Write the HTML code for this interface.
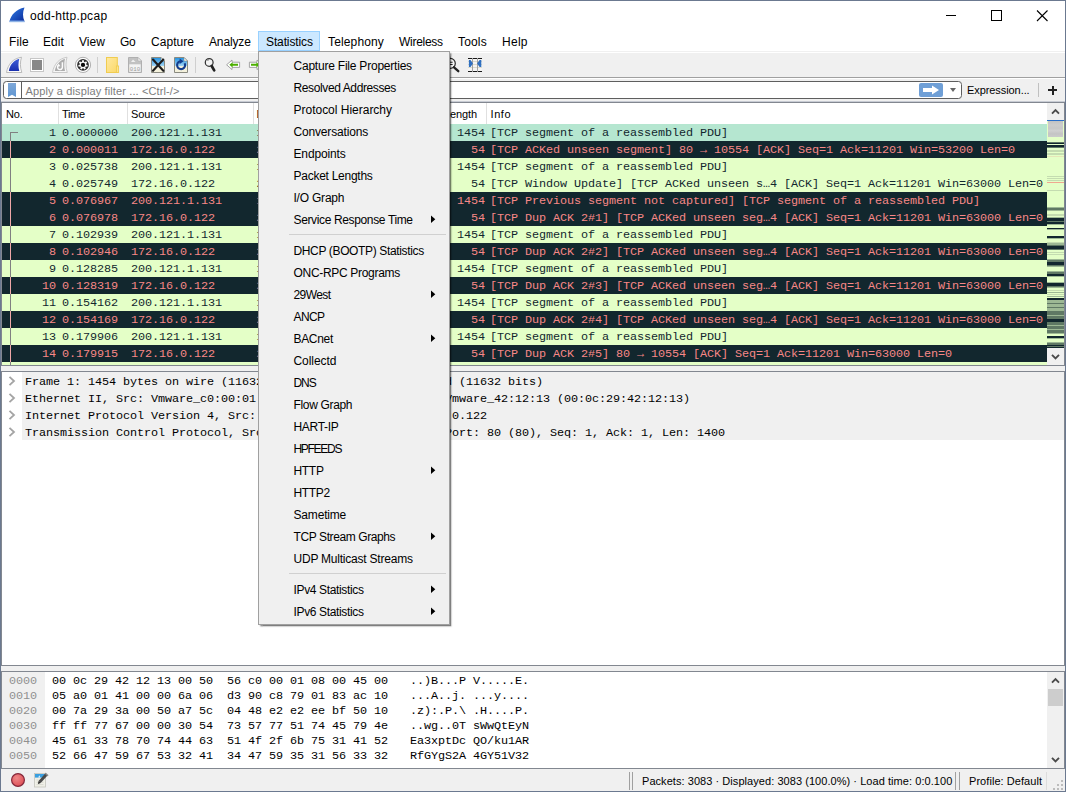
<!DOCTYPE html>
<html><head><meta charset="utf-8"><title>odd-http.pcap</title>
<style>
*{box-sizing:border-box;margin:0;padding:0}
html,body{width:1066px;height:792px;overflow:hidden;background:#fff}
body{font-family:"Liberation Sans",sans-serif;font-size:12px;color:#000;position:relative}
.abs{position:absolute}
.t{position:absolute;white-space:pre;line-height:16px;font-size:12px}
.m{position:absolute;white-space:pre;font-family:"Liberation Mono",monospace;font-size:11.8px;letter-spacing:-0.08px;line-height:17px}
.row{position:absolute;left:2px;width:1045px;height:17px}
.mi{position:absolute;left:34.5px;white-space:pre;font-size:12px;line-height:16px;color:#000}
.arr{position:absolute;left:172px;width:0;height:0;border-left:4.4px solid #000;border-top:3.8px solid transparent;border-bottom:3.8px solid transparent}
.sep{position:absolute;left:30px;width:157px;height:1px;background:#d0d0d0}
</style></head>
<body>
<div class="abs" style="left:0;top:0;width:1066px;height:792px;border:1px solid #6b7990;background:#fff"></div>
<svg class="abs" style="left:9px;top:7px" width="16" height="16" viewBox="0 0 16 16">
<defs><linearGradient id="fin" x1="0" y1="0" x2="1" y2="1"><stop offset="0" stop-color="#2f7fe8"/><stop offset="1" stop-color="#0b2a9a"/></linearGradient></defs>
<path d="M0.5 14.5 C2 8 7 2 15.5 0.5 C13.5 5 13.5 10 15.5 14.5 Z" fill="url(#fin)"/>
<rect x="0.3" y="13.6" width="15.4" height="1.6" fill="#8fb4e6"/>
</svg>
<div class="t" id="title" style="left:30px;top:8px;font-size:12px;letter-spacing:0.308px;">odd-http.pcap</div>
<svg class="abs" style="left:927px;top:1px" width="138" height="30" viewBox="0 0 138 30">
<path d="M19 14.5 H29" stroke="#000" stroke-width="1"/>
<rect x="64.5" y="9.5" width="10" height="10" fill="none" stroke="#000" stroke-width="1"/>
<path d="M110 9.5 L120.5 20 M120.5 9.5 L110 20" stroke="#000" stroke-width="1.1" fill="none"/>
</svg>
<div class="abs" style="left:258px;top:31px;width:62px;height:20px;background:#cce8ff;border:1px solid #99d1ff"></div>
<div class="t" id="mb_File" style="left:9px;top:34px;font-size:12px;letter-spacing:0.114px;">File</div>
<div class="t" id="mb_Edit" style="left:43px;top:34px;font-size:12px;letter-spacing:0.028px;">Edit</div>
<div class="t" id="mb_View" style="left:79px;top:34px;font-size:12px;letter-spacing:0.001px;">View</div>
<div class="t" id="mb_Go" style="left:120px;top:34px;font-size:12px;letter-spacing:-0.408px;">Go</div>
<div class="t" id="mb_Capture" style="left:151px;top:34px;font-size:12px;letter-spacing:0.042px;">Capture</div>
<div class="t" id="mb_Analyze" style="left:209px;top:34px;font-size:12px;letter-spacing:-0.129px;">Analyze</div>
<div class="t" id="mb_Statistics" style="left:266px;top:34px;font-size:12px;letter-spacing:-0.122px;">Statistics</div>
<div class="t" id="mb_Telephony" style="left:328px;top:34px;font-size:12px;letter-spacing:0.142px;">Telephony</div>
<div class="t" id="mb_Wireless" style="left:399px;top:34px;font-size:12px;letter-spacing:-0.277px;">Wireless</div>
<div class="t" id="mb_Tools" style="left:458px;top:34px;font-size:12px;letter-spacing:0.157px;">Tools</div>
<div class="t" id="mb_Help" style="left:502px;top:34px;font-size:12px;letter-spacing:0.278px;">Help</div>
<div class="abs" style="left:1px;top:51px;width:1064px;height:1px;background:#f0f0f0"></div>
<div class="abs" style="left:1px;top:53px;width:1064px;height:24px;background:#f0f0f0"></div>
<div class="abs" style="left:1px;top:77px;width:1064px;height:1px;background:#a0a0a0"></div>
<div class="abs" style="left:1px;top:79px;width:1064px;height:22px;background:#f0f0f0"></div>
<svg class="abs" style="left:0;top:53px" width="500" height="24" viewBox="0 53 500 24">
<defs>
<linearGradient id="g_fin" x1="0" y1="0" x2="0" y2="1"><stop offset="0" stop-color="#3f5fd8"/><stop offset="1" stop-color="#1a2fae"/></linearGradient>
<linearGradient id="g_fold" x1="0" y1="0" x2="1" y2="1"><stop offset="0" stop-color="#ffe9a0"/><stop offset="1" stop-color="#fbd96a"/></linearGradient>
<linearGradient id="g_sky" x1="0" y1="0" x2="0" y2="1"><stop offset="0" stop-color="#1e8fe0"/><stop offset="0.55" stop-color="#9fd4f5"/><stop offset="0.56" stop-color="#f4f1dc"/><stop offset="1" stop-color="#f4f1dc"/></linearGradient>
</defs>
<path d="M6.5 72.5 C8 64 13 58.5 21.5 57.2 C20 62 20 67.5 21.8 72.5 Z" fill="#fbfbfb" stroke="#b4b4b4" stroke-width="0.9"/>
<path d="M8.8 71 C10 65 13.5 60.3 19.3 58.8 C18.2 63 18.2 67 19.3 71 Z" fill="url(#g_fin)"/>
<rect x="30.5" y="58.5" width="13" height="13" fill="#fff" stroke="#c6c6c6"/>
<rect x="32" y="60" width="10" height="10" fill="#888"/>
<path d="M52.5 72.5 C54 64 59 58.5 67 57.2 C65.6 62 65.6 67.5 67.3 72.5 Z" fill="#f6f6f6" stroke="#c4c4c4" stroke-width="0.9"/>
<path d="M54.8 71 C56 65 59.5 60.3 65 58.8 C64 63 64 67 65 71 Z" fill="#adadad"/>
<path d="M62.4 62.3 V67.3 A2.4 2.4 0 1 1 58.4 65.4" fill="none" stroke="#fbfbfb" stroke-width="1.5"/><path d="M57 66.4 L58.6 63.6 L60.4 66.2 Z" fill="#fbfbfb"/>
<circle cx="83" cy="64.9" r="7.6" fill="#fff" stroke="#9c9c9c" stroke-width="0.8"/>
<circle cx="83" cy="64.9" r="5.9" fill="#2c2c2c"/>
<path d="M82.08 60.29 L83.92 60.29 L83.99 61.75 L84.84 62.16 L86.03 61.31 L87.18 62.75 L86.08 63.71 L86.29 64.63 L87.70 65.03 L87.29 66.82 L85.85 66.57 L85.26 67.31 L85.83 68.65 L84.17 69.45 L83.47 68.17 L82.53 68.17 L81.83 69.45 L80.17 68.65 L80.74 67.31 L80.15 66.57 L78.71 66.82 L78.30 65.03 L79.71 64.63 L79.92 63.71 L78.82 62.75 L79.97 61.31 L81.16 62.16 L82.01 61.75 Z" fill="#fafafa"/>
<circle cx="83" cy="64.9" r="2.15" fill="#0c0c0c"/>
<rect x="97" y="57" width="1" height="16" fill="#cfcfcf"/>
<rect x="106.5" y="57.5" width="10.8" height="15" fill="url(#g_fold)" stroke="#f0cc50"/>
<rect x="116.4" y="66" width="2.2" height="6.5" fill="#fde48c" stroke="#f0cc50" stroke-width="0.9"/>
<path d="M128.5 57.5 H138 L141.5 61 V72.5 H128.5 Z" fill="#c2c2c2" stroke="#b0b0b0"/>
<path d="M138 57.5 V61 H141.5 Z" fill="#f4f4f4" stroke="#b0b0b0" stroke-width="0.6"/>
<rect x="129.3" y="64.3" width="11.4" height="7.6" fill="#f4f4f4"/>
<path d="M131 62 L133 59.5 L135.5 62 Z" fill="#f0f0f0"/>
<text x="129.8" y="70.6" font-family="Liberation Mono" font-size="5.8" fill="#9a9a9a" textLength="10.4" lengthAdjust="spacingAndGlyphs">010</text>
<path d="M151.5 57.5 H161 L164.5 61 V72.5 H151.5 Z" fill="url(#g_sky)" stroke="#8a8a80"/>
<path d="M161 57.5 V61 H164.5 Z" fill="#fff" stroke="#8a8a80" stroke-width="0.6"/>
<path d="M153 59.5 L163.3 70.8 M163.3 59.5 L153 70.8" stroke="#1c1c1c" stroke-width="2.1" stroke-linecap="round"/>
<path d="M174.5 57.5 H184 L187.5 61 V72.5 H174.5 Z" fill="url(#g_sky)" stroke="#8a8a80"/>
<path d="M184 57.5 V61 H187.5 Z" fill="#fff" stroke="#8a8a80" stroke-width="0.6"/>
<path d="M184.6 63.2 A4 4 0 1 1 180 61.3" fill="none" stroke="#143c8c" stroke-width="2.1"/>
<path d="M179.6 58.6 L183.6 61.2 L179.6 63.9 Z" fill="#143c8c"/>
<rect x="195" y="57" width="1" height="16" fill="#cfcfcf"/>
<circle cx="209.2" cy="62.4" r="3.9" fill="#f3f3f3" stroke="#333" stroke-width="1.25"/>
<path d="M207.2 61 A2.4 2.4 0 0 1 209 59.8" fill="none" stroke="#555" stroke-width="0.6"/>
<path d="M211.7 66 L214.2 70.4" stroke="#222" stroke-width="2.7" stroke-linecap="round"/>
<path d="M226.6 64.8 L232 60 V62.2 H239.6 V67.4 H232 V69.6 Z" fill="#fff" stroke="#9a9a9a" stroke-width="0.9" stroke-linejoin="round"/>
<path d="M229.3 64.8 L232.6 62.2 V63.8 H238 V65.8 H232.6 V67.4 Z" fill="#4caf00"/>
<path d="M249.4 62.2 H257 V60 L262.4 64.8 L257 69.6 V67.4 H249.4 Z" fill="#fff" stroke="#9a9a9a" stroke-width="0.9" stroke-linejoin="round"/>
<path d="M251 63.8 H256.4 V62.2 L259.7 64.8 L256.4 67.4 V65.8 H251 Z" fill="#4caf00"/>
<circle cx="450.3" cy="63.4" r="5" fill="#f6f6f6" stroke="#2a2a2a" stroke-width="1.2"/>
<path d="M448 62.3 H452.6 M448 64.5 H452.6" stroke="#222" stroke-width="1.1"/>
<path d="M454 67.3 L458.3 71.2" stroke="#222" stroke-width="2.3" stroke-linecap="round"/>
<rect x="468" y="58" width="14" height="14" fill="#f4f4f4"/>
<path d="M468 61.5 H482 M468 64.5 H482 M468 67.5 H482" stroke="#d4d4c4" stroke-width="0.8"/>
<path d="M472.5 58 V72 M477.5 58 V72" stroke="#a2a2a2" stroke-width="1"/>
<path d="M468 58.5 H472 M473 58.5 H477 M478 58.5 H482 M468 71.5 H472 M473 71.5 H477 M478 71.5 H482" stroke="#1a1a1a" stroke-width="1"/>
<path d="M468.9 59.9 H470.5 L473 63.4 L470.5 66.9 H468.9 Z M481.3 59.9 H479.6 L477.1 63.4 L479.6 66.9 H481.3 Z" fill="#2f6fc0"/>
</svg>
<div class="abs" style="left:3px;top:81px;width:959px;height:18px;background:#fff;border:1px solid #5e5e5e;border-radius:3.5px"></div>
<div class="abs" style="left:21px;top:82px;width:1px;height:16px;background:#5e5e5e"></div>
<svg class="abs" style="left:8px;top:83px" width="8" height="14" viewBox="0 0 8 14"><defs><linearGradient id="bm" x1="0" y1="0" x2="0" y2="1"><stop offset="0" stop-color="#7fa8d8"/><stop offset="1" stop-color="#5f96d2"/></linearGradient></defs><path d="M0 0 H8 V14 L4 11.7 L0 14 Z" fill="url(#bm)"/></svg>
<div class="t" id="flt" style="left:25.5px;top:83px;font-size:11px;letter-spacing:0.123px;color:#7d7d7d">Apply a display filter ... &lt;Ctrl-/&gt;</div>
<div class="abs" style="left:919px;top:83px;width:24px;height:14px;background:#6f9fd6;border-radius:2px"></div>
<svg class="abs" style="left:919px;top:83px" width="24" height="14" viewBox="0 0 24 14"><path d="M4 5 H13 V2.5 L20 7 L13 11.5 V9 H4 Z" fill="#fff"/></svg>
<div class="abs" style="left:950px;top:88px;width:0;height:0;border-top:4px solid #666;border-left:3.5px solid transparent;border-right:3.5px solid transparent"></div>
<div class="t" id="expr" style="left:967px;top:82px;font-size:11px;letter-spacing:-0.076px;">Expression...</div>
<div class="abs" style="left:1038px;top:83px;width:1px;height:14px;background:#c0c0c0"></div>
<div class="abs" style="left:1048px;top:89px;width:9px;height:2px;background:#222"></div>
<div class="abs" style="left:1051.5px;top:85.5px;width:2px;height:9px;background:#222"></div>
<div class="abs" style="left:1px;top:101px;width:1064px;height:1px;background:#c8ccd4"></div>
<div class="abs" style="left:1px;top:102px;width:1064px;height:264px;border:1px solid #828790;border-top-color:#828790;background:#fff"></div>
<div class="abs" style="left:58px;top:103px;width:1px;height:21px;background:#e0e0e0"></div>
<div class="abs" style="left:127px;top:103px;width:1px;height:21px;background:#e0e0e0"></div>
<div class="abs" style="left:253px;top:103px;width:1px;height:21px;background:#e0e0e0"></div>
<div class="abs" style="left:486px;top:103px;width:1px;height:21px;background:#e0e0e0"></div>
<div class="t" id="h_No." style="left:6px;top:106px;font-size:11px;letter-spacing:-0.175px;">No.</div>
<div class="t" id="h_Time" style="left:62px;top:106px;font-size:11px;letter-spacing:-0.337px;">Time</div>
<div class="t" id="h_Source" style="left:131px;top:106px;font-size:11px;letter-spacing:-0.127px;">Source</div>
<div class="t" id="h_Destination" style="left:256.5px;top:106px;font-size:11px;letter-spacing:0.159px;">Destination</div>
<div class="t" id="h_Info" style="left:490.5px;top:106px;font-size:11px;letter-spacing:0.585px;">Info</div>
<div class="t" id="h_Length" style="right:589px;top:106px;font-size:11px;letter-spacing:-0.127px">Length</div>
<div class="row" style="top:124px;background:#b5e6d0;color:#12272e"><span class="m" style="right:991.08px;top:1px">1</span><span class="m" style="left:60px;top:1px">0.000000</span><span class="m" style="left:129px;top:1px">200.121.1.131</span><span class="m" style="left:254.60000000000002px;top:1px">172.16.0.122</span><span class="m" style="left:381px;top:1px">TCP</span><span class="m" style="right:562.08px;top:1px">1454</span><span class="m" style="left:488px;top:1px">[TCP segment of a reassembled PDU]</span></div>
<div class="abs" style="left:10px;top:132px;width:1px;height:9px;background:#808080"></div>
<div class="abs" style="left:10px;top:132px;width:8px;height:1px;background:#808080"></div>
<div class="row" style="top:141px;background:#12272e;color:#f78787"><span class="m" style="right:991.08px;top:1px">2</span><span class="m" style="left:60px;top:1px">0.000011</span><span class="m" style="left:129px;top:1px">172.16.0.122</span><span class="m" style="left:254.60000000000002px;top:1px">200.121.1.131</span><span class="m" style="left:381px;top:1px">TCP</span><span class="m" style="right:562.08px;top:1px">54</span><span class="m" style="left:488px;top:1px">[TCP ACKed unseen segment] 80 → 10554 [ACK] Seq=1 Ack=11201 Win=53200 Len=0</span></div>
<div class="abs" style="left:10px;top:141px;width:1px;height:17px;background:#f0a8a8"></div>
<div class="row" style="top:158px;background:#e4ffc7;color:#12272e"><span class="m" style="right:991.08px;top:1px">3</span><span class="m" style="left:60px;top:1px">0.025738</span><span class="m" style="left:129px;top:1px">200.121.1.131</span><span class="m" style="left:254.60000000000002px;top:1px">172.16.0.122</span><span class="m" style="left:381px;top:1px">TCP</span><span class="m" style="right:562.08px;top:1px">1454</span><span class="m" style="left:488px;top:1px">[TCP segment of a reassembled PDU]</span></div>
<div class="abs" style="left:10px;top:158px;width:1px;height:17px;background:#808080"></div>
<div class="row" style="top:175px;background:#e4ffc7;color:#12272e"><span class="m" style="right:991.08px;top:1px">4</span><span class="m" style="left:60px;top:1px">0.025749</span><span class="m" style="left:129px;top:1px">172.16.0.122</span><span class="m" style="left:254.60000000000002px;top:1px">200.121.1.131</span><span class="m" style="left:381px;top:1px">TCP</span><span class="m" style="right:562.08px;top:1px">54</span><span class="m" style="left:488px;top:1px">[TCP Window Update] [TCP ACKed unseen s…4 [ACK] Seq=1 Ack=11201 Win=63000 Len=0</span></div>
<div class="abs" style="left:10px;top:175px;width:1px;height:17px;background:#808080"></div>
<div class="row" style="top:192px;background:#12272e;color:#f78787"><span class="m" style="right:991.08px;top:1px">5</span><span class="m" style="left:60px;top:1px">0.076967</span><span class="m" style="left:129px;top:1px">200.121.1.131</span><span class="m" style="left:254.60000000000002px;top:1px">172.16.0.122</span><span class="m" style="left:381px;top:1px">TCP</span><span class="m" style="right:562.08px;top:1px">1454</span><span class="m" style="left:488px;top:1px">[TCP Previous segment not captured] [TCP segment of a reassembled PDU]</span></div>
<div class="abs" style="left:10px;top:192px;width:1px;height:17px;background:#f0a8a8"></div>
<div class="row" style="top:209px;background:#12272e;color:#f78787"><span class="m" style="right:991.08px;top:1px">6</span><span class="m" style="left:60px;top:1px">0.076978</span><span class="m" style="left:129px;top:1px">172.16.0.122</span><span class="m" style="left:254.60000000000002px;top:1px">200.121.1.131</span><span class="m" style="left:381px;top:1px">TCP</span><span class="m" style="right:562.08px;top:1px">54</span><span class="m" style="left:488px;top:1px">[TCP Dup ACK 2#1] [TCP ACKed unseen seg…4 [ACK] Seq=1 Ack=11201 Win=63000 Len=0</span></div>
<div class="abs" style="left:10px;top:209px;width:1px;height:17px;background:#f0a8a8"></div>
<div class="row" style="top:226px;background:#e4ffc7;color:#12272e"><span class="m" style="right:991.08px;top:1px">7</span><span class="m" style="left:60px;top:1px">0.102939</span><span class="m" style="left:129px;top:1px">200.121.1.131</span><span class="m" style="left:254.60000000000002px;top:1px">172.16.0.122</span><span class="m" style="left:381px;top:1px">TCP</span><span class="m" style="right:562.08px;top:1px">1454</span><span class="m" style="left:488px;top:1px">[TCP segment of a reassembled PDU]</span></div>
<div class="abs" style="left:10px;top:226px;width:1px;height:17px;background:#808080"></div>
<div class="row" style="top:243px;background:#12272e;color:#f78787"><span class="m" style="right:991.08px;top:1px">8</span><span class="m" style="left:60px;top:1px">0.102946</span><span class="m" style="left:129px;top:1px">172.16.0.122</span><span class="m" style="left:254.60000000000002px;top:1px">200.121.1.131</span><span class="m" style="left:381px;top:1px">TCP</span><span class="m" style="right:562.08px;top:1px">54</span><span class="m" style="left:488px;top:1px">[TCP Dup ACK 2#2] [TCP ACKed unseen seg…4 [ACK] Seq=1 Ack=11201 Win=63000 Len=0</span></div>
<div class="abs" style="left:10px;top:243px;width:1px;height:17px;background:#f0a8a8"></div>
<div class="row" style="top:260px;background:#e4ffc7;color:#12272e"><span class="m" style="right:991.08px;top:1px">9</span><span class="m" style="left:60px;top:1px">0.128285</span><span class="m" style="left:129px;top:1px">200.121.1.131</span><span class="m" style="left:254.60000000000002px;top:1px">172.16.0.122</span><span class="m" style="left:381px;top:1px">TCP</span><span class="m" style="right:562.08px;top:1px">1454</span><span class="m" style="left:488px;top:1px">[TCP segment of a reassembled PDU]</span></div>
<div class="abs" style="left:10px;top:260px;width:1px;height:17px;background:#808080"></div>
<div class="row" style="top:277px;background:#12272e;color:#f78787"><span class="m" style="right:991.08px;top:1px">10</span><span class="m" style="left:60px;top:1px">0.128319</span><span class="m" style="left:129px;top:1px">172.16.0.122</span><span class="m" style="left:254.60000000000002px;top:1px">200.121.1.131</span><span class="m" style="left:381px;top:1px">TCP</span><span class="m" style="right:562.08px;top:1px">54</span><span class="m" style="left:488px;top:1px">[TCP Dup ACK 2#3] [TCP ACKed unseen seg…4 [ACK] Seq=1 Ack=11201 Win=63000 Len=0</span></div>
<div class="abs" style="left:10px;top:277px;width:1px;height:17px;background:#f0a8a8"></div>
<div class="row" style="top:294px;background:#e4ffc7;color:#12272e"><span class="m" style="right:991.08px;top:1px">11</span><span class="m" style="left:60px;top:1px">0.154162</span><span class="m" style="left:129px;top:1px">200.121.1.131</span><span class="m" style="left:254.60000000000002px;top:1px">172.16.0.122</span><span class="m" style="left:381px;top:1px">TCP</span><span class="m" style="right:562.08px;top:1px">1454</span><span class="m" style="left:488px;top:1px">[TCP segment of a reassembled PDU]</span></div>
<div class="abs" style="left:10px;top:294px;width:1px;height:17px;background:#808080"></div>
<div class="row" style="top:311px;background:#12272e;color:#f78787"><span class="m" style="right:991.08px;top:1px">12</span><span class="m" style="left:60px;top:1px">0.154169</span><span class="m" style="left:129px;top:1px">172.16.0.122</span><span class="m" style="left:254.60000000000002px;top:1px">200.121.1.131</span><span class="m" style="left:381px;top:1px">TCP</span><span class="m" style="right:562.08px;top:1px">54</span><span class="m" style="left:488px;top:1px">[TCP Dup ACK 2#4] [TCP ACKed unseen seg…4 [ACK] Seq=1 Ack=11201 Win=63000 Len=0</span></div>
<div class="abs" style="left:10px;top:311px;width:1px;height:17px;background:#f0a8a8"></div>
<div class="row" style="top:328px;background:#e4ffc7;color:#12272e"><span class="m" style="right:991.08px;top:1px">13</span><span class="m" style="left:60px;top:1px">0.179906</span><span class="m" style="left:129px;top:1px">200.121.1.131</span><span class="m" style="left:254.60000000000002px;top:1px">172.16.0.122</span><span class="m" style="left:381px;top:1px">TCP</span><span class="m" style="right:562.08px;top:1px">1454</span><span class="m" style="left:488px;top:1px">[TCP segment of a reassembled PDU]</span></div>
<div class="abs" style="left:10px;top:328px;width:1px;height:17px;background:#808080"></div>
<div class="row" style="top:345px;background:#12272e;color:#f78787"><span class="m" style="right:991.08px;top:1px">14</span><span class="m" style="left:60px;top:1px">0.179915</span><span class="m" style="left:129px;top:1px">172.16.0.122</span><span class="m" style="left:254.60000000000002px;top:1px">200.121.1.131</span><span class="m" style="left:381px;top:1px">TCP</span><span class="m" style="right:562.08px;top:1px">54</span><span class="m" style="left:488px;top:1px">[TCP Dup ACK 2#5] 80 → 10554 [ACK] Seq=1 Ack=11201 Win=63000 Len=0</span></div>
<div class="abs" style="left:10px;top:345px;width:1px;height:17px;background:#f0a8a8"></div>
<div class="row" style="top:362px;height:3px;background:#e4ffc7"></div>
<div class="abs" style="left:10px;top:362px;width:1px;height:3px;background:#808080"></div>
<div class="abs" style="left:1047px;top:103px;width:17px;height:262px;background:#f0f0f0"></div>
<div class="abs" style="left:1047px;top:120px;width:17px;height:228px;background:#e4ffc7"></div>
<div class="abs" style="left:1047px;top:120px;width:17px;height:228px;overflow:hidden"><div class="abs" style="left:-6px;top:0;width:29px;height:228px;filter:blur(0.55px)">
<div class="abs" style="left:0;top:22px;width:29px;height:1px;background:#5f7864"></div>
<div class="abs" style="left:0;top:23px;width:29px;height:1px;background:#12272e"></div>
<div class="abs" style="left:0;top:25px;width:29px;height:2px;background:#12272e"></div>
<div class="abs" style="left:0;top:27px;width:29px;height:1px;background:#5f7864"></div>
<div class="abs" style="left:0;top:30px;width:29px;height:2px;background:#c4dcb0"></div>
<div class="abs" style="left:0;top:33px;width:29px;height:2px;background:#c4dcb0"></div>
<div class="abs" style="left:0;top:36px;width:29px;height:1px;background:#e6e6b8"></div>
<div class="abs" style="left:0;top:56px;width:29px;height:1px;background:#c4dcb0"></div>
<div class="abs" style="left:0;top:58px;width:29px;height:1px;background:#c4dcb0"></div>
<div class="abs" style="left:0;top:60px;width:29px;height:1px;background:#c4dcb0"></div>
<div class="abs" style="left:0;top:62px;width:29px;height:1px;background:#f0a890"></div>
<div class="abs" style="left:0;top:70px;width:29px;height:1px;background:#c4dcb0"></div>
<div class="abs" style="left:0;top:87px;width:29px;height:1px;background:#9db894"></div>
<div class="abs" style="left:0;top:88px;width:29px;height:2px;background:#5f7864"></div>
<div class="abs" style="left:0;top:90px;width:29px;height:1px;background:#9db894"></div>
<div class="abs" style="left:0;top:94px;width:29px;height:2px;background:#c4dcb0"></div>
<div class="abs" style="left:0;top:97px;width:29px;height:1px;background:#9db894"></div>
<div class="abs" style="left:0;top:98px;width:29px;height:3px;background:#12272e"></div>
<div class="abs" style="left:0;top:101px;width:29px;height:1px;background:#5f7864"></div>
<div class="abs" style="left:0;top:102px;width:29px;height:2px;background:#12272e"></div>
<div class="abs" style="left:0;top:104px;width:29px;height:1px;background:#9db894"></div>
<div class="abs" style="left:0;top:108px;width:29px;height:1px;background:#12272e"></div>
<div class="abs" style="left:0;top:109px;width:29px;height:1px;background:#9db894"></div>
<div class="abs" style="left:0;top:116px;width:29px;height:2px;background:#12272e"></div>
<div class="abs" style="left:0;top:118px;width:29px;height:1px;background:#9db894"></div>
<div class="abs" style="left:0;top:122px;width:29px;height:1px;background:#c4dcb0"></div>
<div class="abs" style="left:0;top:123px;width:29px;height:2px;background:#9db894"></div>
<div class="abs" style="left:0;top:125px;width:29px;height:1px;background:#5f7864"></div>
<div class="abs" style="left:0;top:126px;width:29px;height:3px;background:#12272e"></div>
<div class="abs" style="left:0;top:129px;width:29px;height:1px;background:#5f7864"></div>
<div class="abs" style="left:0;top:132px;width:29px;height:1px;background:#c4dcb0"></div>
<div class="abs" style="left:0;top:134px;width:29px;height:1px;background:#c4dcb0"></div>
<div class="abs" style="left:0;top:139px;width:29px;height:1px;background:#9db894"></div>
<div class="abs" style="left:0;top:140px;width:29px;height:2px;background:#5f7864"></div>
<div class="abs" style="left:0;top:142px;width:29px;height:3px;background:#12272e"></div>
<div class="abs" style="left:0;top:145px;width:29px;height:1px;background:#5f7864"></div>
<div class="abs" style="left:0;top:146px;width:29px;height:1px;background:#9db894"></div>
<div class="abs" style="left:0;top:151px;width:29px;height:1px;background:#9db894"></div>
<div class="abs" style="left:0;top:152px;width:29px;height:2px;background:#5f7864"></div>
<div class="abs" style="left:0;top:154px;width:29px;height:2px;background:#12272e"></div>
<div class="abs" style="left:0;top:156px;width:29px;height:1px;background:#9db894"></div>
<div class="abs" style="left:0;top:162px;width:29px;height:1px;background:#9db894"></div>
<div class="abs" style="left:0;top:163px;width:29px;height:3px;background:#12272e"></div>
<div class="abs" style="left:0;top:166px;width:29px;height:1px;background:#5f7864"></div>
<div class="abs" style="left:0;top:167px;width:29px;height:1px;background:#9db894"></div>
<div class="abs" style="left:0;top:170px;width:29px;height:1px;background:#c4dcb0"></div>
<div class="abs" style="left:0;top:172px;width:29px;height:1px;background:#9db894"></div>
<div class="abs" style="left:0;top:174px;width:29px;height:1px;background:#c4dcb0"></div>
<div class="abs" style="left:0;top:176px;width:29px;height:1px;background:#9db894"></div>
<div class="abs" style="left:0;top:178px;width:29px;height:2px;background:#12272e"></div>
<div class="abs" style="left:0;top:180px;width:29px;height:11px;background:#9db894"></div>
<div class="abs" style="left:0;top:183px;width:29px;height:1px;background:#5f7864"></div>
<div class="abs" style="left:0;top:187px;width:29px;height:1px;background:#5f7864"></div>
<div class="abs" style="left:0;top:191px;width:29px;height:1px;background:#5f7864"></div>
<div class="abs" style="left:0;top:192px;width:29px;height:7px;background:#5f7864"></div>
<div class="abs" style="left:0;top:195px;width:29px;height:1px;background:#9db894"></div>
<div class="abs" style="left:0;top:199px;width:29px;height:3px;background:#12272e"></div>
<div class="abs" style="left:0;top:202px;width:29px;height:11px;background:#5f7864"></div>
<div class="abs" style="left:0;top:205px;width:29px;height:1px;background:#9db894"></div>
<div class="abs" style="left:0;top:209px;width:29px;height:1px;background:#9db894"></div>
<div class="abs" style="left:0;top:213px;width:29px;height:1px;background:#9db894"></div>
<div class="abs" style="left:0;top:216px;width:29px;height:2px;background:#12272e"></div>
<div class="abs" style="left:0;top:218px;width:29px;height:1px;background:#9db894"></div>
<div class="abs" style="left:0;top:222px;width:29px;height:1px;background:#9db894"></div>
<div class="abs" style="left:0;top:223px;width:29px;height:4px;background:#5f7864"></div>
<div class="abs" style="left:0;top:225px;width:29px;height:1px;background:#12272e"></div>
<div class="abs" style="left:0;top:227px;width:29px;height:1px;background:#12272e"></div>
</div></div>
<div class="abs" style="left:1047px;top:120px;width:17px;height:1px;background:#2a6fc9"></div>
<div class="abs" style="left:1048px;top:121px;width:15px;height:16px;background:linear-gradient(#c2c2c2,#cdcdcd 25%,#c8c8c8 45%,#d0d0d0 60%,#c4c4c4 80%,#cbcbcb)"></div>
<svg class="abs" style="left:1047px;top:103px" width="17" height="17" viewBox="0 0 17 17"><path d="M5 10.6 L8.5 7.1 L12 10.6" fill="none" stroke="#4a4a4a" stroke-width="1.9"/></svg>
<svg class="abs" style="left:1047px;top:348px" width="17" height="17" viewBox="0 0 17 17"><path d="M5 6.8 L8.5 10.3 L12 6.8" fill="none" stroke="#4a4a4a" stroke-width="1.9"/></svg>
<div class="abs" style="left:1px;top:366px;width:1064px;height:5px;background:#f0f0f0"></div>
<div class="abs" style="left:1px;top:371px;width:1064px;height:295px;border:1px solid #828790;background:#fff"></div>
<div class="abs" style="left:22px;top:372px;width:1042px;height:17px;background:#f0f0f0"></div>
<div class="m" style="left:25px;top:374px">Frame 1: 1454 bytes on wire (11632 bits), 1454 bytes captured (11632 bits)</div>
<svg class="abs" style="left:8px;top:376px" width="8" height="10" viewBox="0 0 8 10"><path d="M1.5 0.8 L6 5 L1.5 9.2" fill="none" stroke="#a4a4a4" stroke-width="1.8"/></svg>
<div class="abs" style="left:22px;top:389px;width:1042px;height:17px;background:#f0f0f0"></div>
<div class="m" style="left:25px;top:391px">Ethernet II, Src: Vmware_c0:00:01 (00:50:56:c0:00:01), Dst: Vmware_42:12:13 (00:0c:29:42:12:13)</div>
<svg class="abs" style="left:8px;top:393px" width="8" height="10" viewBox="0 0 8 10"><path d="M1.5 0.8 L6 5 L1.5 9.2" fill="none" stroke="#a4a4a4" stroke-width="1.8"/></svg>
<div class="abs" style="left:22px;top:406px;width:1042px;height:17px;background:#f0f0f0"></div>
<div class="m" style="left:25px;top:408px">Internet Protocol Version 4, Src: 200.121.1.131, Dst: 172.16.0.122</div>
<svg class="abs" style="left:8px;top:410px" width="8" height="10" viewBox="0 0 8 10"><path d="M1.5 0.8 L6 5 L1.5 9.2" fill="none" stroke="#a4a4a4" stroke-width="1.8"/></svg>
<div class="abs" style="left:22px;top:423px;width:1042px;height:17px;background:#f0f0f0"></div>
<div class="m" style="left:25px;top:425px">Transmission Control Protocol, Src Port: 10554 (10554), Dst Port: 80 (80), Seq: 1, Ack: 1, Len: 1400</div>
<svg class="abs" style="left:8px;top:427px" width="8" height="10" viewBox="0 0 8 10"><path d="M1.5 0.8 L6 5 L1.5 9.2" fill="none" stroke="#a4a4a4" stroke-width="1.8"/></svg>
<div class="abs" style="left:1px;top:666px;width:1064px;height:5px;background:#f0f0f0"></div>
<div class="abs" style="left:1px;top:671px;width:1064px;height:98px;border:1px solid #828790;background:#fff"></div>
<div class="abs" style="left:2px;top:672px;width:43px;height:96px;background:#f0f0f0"></div>
<div class="m" style="left:9px;top:674px;line-height:15px;color:#909090">0000</div>
<div class="m" style="left:52px;top:674px;line-height:15px">00 0c 29 42 12 13 00 50  56 c0 00 01 08 00 45 00</div>
<div class="m" style="left:410px;top:674px;line-height:15px">..)B...P V.....E.</div>
<div class="m" style="left:9px;top:689px;line-height:15px;color:#909090">0010</div>
<div class="m" style="left:52px;top:689px;line-height:15px">05 a0 01 41 00 00 6a 06  d3 90 c8 79 01 83 ac 10</div>
<div class="m" style="left:410px;top:689px;line-height:15px">...A..j. ...y....</div>
<div class="m" style="left:9px;top:704px;line-height:15px;color:#909090">0020</div>
<div class="m" style="left:52px;top:704px;line-height:15px">00 7a 29 3a 00 50 a7 5c  04 48 e2 e2 ee bf 50 10</div>
<div class="m" style="left:410px;top:704px;line-height:15px">.z):.P.\ .H....P.</div>
<div class="m" style="left:9px;top:719px;line-height:15px;color:#909090">0030</div>
<div class="m" style="left:52px;top:719px;line-height:15px">ff ff 77 67 00 00 30 54  73 57 77 51 74 45 79 4e</div>
<div class="m" style="left:410px;top:719px;line-height:15px">..wg..0T sWwQtEyN</div>
<div class="m" style="left:9px;top:734px;line-height:15px;color:#909090">0040</div>
<div class="m" style="left:52px;top:734px;line-height:15px">45 61 33 78 70 74 44 63  51 4f 2f 6b 75 31 41 52</div>
<div class="m" style="left:410px;top:734px;line-height:15px">Ea3xptDc QO/ku1AR</div>
<div class="m" style="left:9px;top:749px;line-height:15px;color:#909090">0050</div>
<div class="m" style="left:52px;top:749px;line-height:15px">52 66 47 59 67 53 32 41  34 47 59 35 31 56 33 32</div>
<div class="m" style="left:410px;top:749px;line-height:15px">RfGYgS2A 4GY51V32</div>
<div class="abs" style="left:1047px;top:672px;width:17px;height:96px;background:#f0f0f0"></div>
<div class="abs" style="left:1048px;top:689px;width:15px;height:17px;background:#cdcdcd"></div>
<svg class="abs" style="left:1047px;top:672px" width="17" height="17" viewBox="0 0 17 17"><path d="M5 10.6 L8.5 7.1 L12 10.6" fill="none" stroke="#4a4a4a" stroke-width="1.9"/></svg>
<svg class="abs" style="left:1047px;top:751px" width="17" height="17" viewBox="0 0 17 17"><path d="M5 6.8 L8.5 10.3 L12 6.8" fill="none" stroke="#4a4a4a" stroke-width="1.9"/></svg>
<div class="abs" style="left:1px;top:769px;width:1064px;height:22px;background:#f0f0f0"></div>
<svg class="abs" style="left:10px;top:772px" width="42" height="16" viewBox="10 772 42 16">
<defs><radialGradient id="g_red" cx="0.4" cy="0.35" r="0.7"><stop offset="0" stop-color="#ee8888"/><stop offset="1" stop-color="#dd4c54"/></radialGradient></defs>
<circle cx="18" cy="780" r="6.4" fill="url(#g_red)" stroke="#84283a" stroke-width="1.2"/>
<rect x="34.5" y="773.5" width="11" height="13.5" fill="#f0f0e8" stroke="#c4c4bc" stroke-width="0.8"/>
<rect x="35" y="774" width="10" height="3.6" fill="#3a9fe0"/>
<path d="M38.3 777.6 L39.3 775.2 L40.3 777.6 Z" fill="#f4f8fc"/>
<path d="M36.5 780 H38.5 M36.5 782.3 H38 M36.5 784.6 H43.5 M42 782.3 H43.5" stroke="#d2d2ca" stroke-width="0.8"/>
<path d="M39.6 782 L46.4 774.4" stroke="#4a4a4a" stroke-width="3" stroke-linecap="butt"/>
<path d="M37.9 783.9 L38.6 780.9 L40.7 782.9 Z" fill="#1e1e1e"/>
<path d="M45.6 773.5 L47.6 775.3" stroke="#8a8a8a" stroke-width="1.6" stroke-linecap="round"/>
</svg>
<svg class="abs" style="left:1050px;top:778px" width="14" height="13" viewBox="1050 778 14 13"><rect x="1061" y="780" width="2" height="2" fill="#bcbcbc"/><rect x="1057" y="784" width="2" height="2" fill="#bcbcbc"/><rect x="1061" y="784" width="2" height="2" fill="#bcbcbc"/><rect x="1053" y="788" width="2" height="2" fill="#bcbcbc"/><rect x="1057" y="788" width="2" height="2" fill="#bcbcbc"/><rect x="1061" y="788" width="2" height="2" fill="#bcbcbc"/></svg>
<div class="abs" style="left:629px;top:772px;width:1px;height:18px;background:#a0a0a0"></div>
<div class="abs" style="left:632px;top:772px;width:1px;height:18px;background:#a0a0a0"></div>
<div class="abs" style="left:955px;top:772px;width:1px;height:18px;background:#a0a0a0"></div>
<div class="abs" style="left:959px;top:772px;width:1px;height:18px;background:#a0a0a0"></div>
<div class="t" id="st1" style="left:642px;top:773px;font-size:11px;letter-spacing:0.055px;">Packets: 3083 · Displayed: 3083 (100.0%) · Load time: 0:0.100</div>
<div class="t" id="st2" style="left:969px;top:773px;font-size:11px;letter-spacing:0.059px;">Profile: Default</div>
<div class="abs" style="left:1046px;top:772px;width:1px;height:18px;background:#dcdcdc"></div>
<div id="menu" class="abs" style="left:258px;top:51px;width:192px;height:574px;background:#f0f0f0;border:1px solid #a0a0a0;box-shadow:1.5px 1.5px 1.5px rgba(0,0,0,0.5)">
<div class="mi" id="mi0" style="top:6px;letter-spacing:-0.217px">Capture File Properties</div>
<div class="mi" id="mi1" style="top:28px;letter-spacing:-0.384px">Resolved Addresses</div>
<div class="mi" id="mi2" style="top:50px;letter-spacing:-0.011px">Protocol Hierarchy</div>
<div class="mi" id="mi3" style="top:72px;letter-spacing:-0.163px">Conversations</div>
<div class="mi" id="mi4" style="top:94px;letter-spacing:-0.142px">Endpoints</div>
<div class="mi" id="mi5" style="top:116px;letter-spacing:-0.260px">Packet Lengths</div>
<div class="mi" id="mi6" style="top:138px;letter-spacing:-0.210px">I/O Graph</div>
<div class="mi" id="mi7" style="top:160px;letter-spacing:-0.359px">Service Response Time</div>
<svg class="abs" style="left:172px;top:163px" width="6" height="9" viewBox="0 0 6 9"><path d="M0 0.4 L4.3 4.2 L0 8 Z" fill="#000"/></svg>
<div class="sep" style="top:182px"></div>
<div class="mi" id="mi8" style="top:191px;letter-spacing:-0.355px">DHCP (BOOTP) Statistics</div>
<div class="mi" id="mi9" style="top:213px;letter-spacing:-0.310px">ONC-RPC Programs</div>
<div class="mi" id="mi10" style="top:235px;letter-spacing:-0.578px">29West</div>
<svg class="abs" style="left:172px;top:238px" width="6" height="9" viewBox="0 0 6 9"><path d="M0 0.4 L4.3 4.2 L0 8 Z" fill="#000"/></svg>
<div class="mi" id="mi11" style="top:257px;letter-spacing:-0.611px">ANCP</div>
<div class="mi" id="mi12" style="top:279px;letter-spacing:-0.327px">BACnet</div>
<svg class="abs" style="left:172px;top:282px" width="6" height="9" viewBox="0 0 6 9"><path d="M0 0.4 L4.3 4.2 L0 8 Z" fill="#000"/></svg>
<div class="mi" id="mi13" style="top:301px;letter-spacing:-0.070px">Collectd</div>
<div class="mi" id="mi14" style="top:323px;letter-spacing:-1.048px">DNS</div>
<div class="mi" id="mi15" style="top:345px;letter-spacing:-0.333px">Flow Graph</div>
<div class="mi" id="mi16" style="top:367px;letter-spacing:-0.304px">HART-IP</div>
<div class="mi" id="mi17" style="top:389px;letter-spacing:-1.298px">HPFEEDS</div>
<div class="mi" id="mi18" style="top:411px;letter-spacing:-0.311px">HTTP</div>
<svg class="abs" style="left:172px;top:414px" width="6" height="9" viewBox="0 0 6 9"><path d="M0 0.4 L4.3 4.2 L0 8 Z" fill="#000"/></svg>
<div class="mi" id="mi19" style="top:433px;letter-spacing:-0.363px">HTTP2</div>
<div class="mi" id="mi20" style="top:455px;letter-spacing:-0.179px">Sametime</div>
<div class="mi" id="mi21" style="top:477px;letter-spacing:-0.399px">TCP Stream Graphs</div>
<svg class="abs" style="left:172px;top:480px" width="6" height="9" viewBox="0 0 6 9"><path d="M0 0.4 L4.3 4.2 L0 8 Z" fill="#000"/></svg>
<div class="mi" id="mi22" style="top:499px;letter-spacing:-0.220px">UDP Multicast Streams</div>
<div class="sep" style="top:521px"></div>
<div class="mi" id="mi23" style="top:530px;letter-spacing:-0.351px">IPv4 Statistics</div>
<svg class="abs" style="left:172px;top:533px" width="6" height="9" viewBox="0 0 6 9"><path d="M0 0.4 L4.3 4.2 L0 8 Z" fill="#000"/></svg>
<div class="mi" id="mi24" style="top:552px;letter-spacing:-0.351px">IPv6 Statistics</div>
<svg class="abs" style="left:172px;top:555px" width="6" height="9" viewBox="0 0 6 9"><path d="M0 0.4 L4.3 4.2 L0 8 Z" fill="#000"/></svg>
</div>
</body></html>
